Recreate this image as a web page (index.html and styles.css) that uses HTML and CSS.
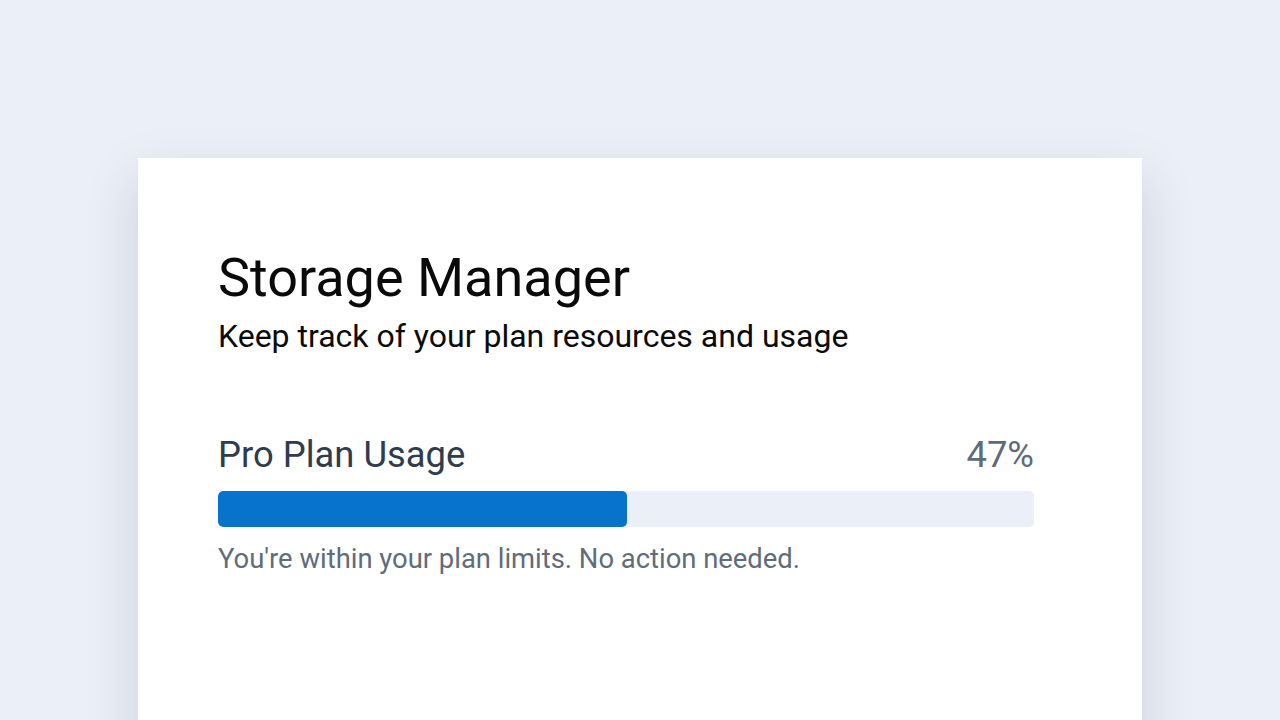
FILE: index.html
```html
<!DOCTYPE html>
<html lang="en">
<head>
<meta charset="utf-8">
<title>Storage Manager</title>
<link rel="stylesheet" href="styles.css">
</head>
<body>
<main class="stage">
  <section class="card">
    <header class="card-head">
      <h1 class="title">Storage Manager</h1>
      <p class="subtitle">Keep track of your plan resources and usage</p>
    </header>
    <div class="usage">
      <div class="usage-row">
        <span class="usage-label">Pro Plan Usage</span>
        <span class="usage-value">47%</span>
      </div>
      <div class="track"><div class="fill" style="width: 50.1%"></div></div>
      <p class="usage-note">You're within your plan limits. No action needed.</p>
    </div>
  </section>
</main>
</body>
</html>
```

FILE: styles.css
```css
* { box-sizing: border-box; }
html, body { margin: 0; padding: 0; }
body {
  background: #ebeff7;
  font-family: Roboto, "Noto Sans", sans-serif;
  width: 1280px;
  height: 720px;
  overflow: hidden;
}
.stage {
  display: flex;
  justify-content: center;
  padding-top: 158px;
}
.card {
  width: 1004px;
  height: 640px;
  background: #ffffff;
  padding: 86px 108px 0 80px;
  box-shadow: 0 20px 50px rgba(30, 50, 90, 0.16);
}
.title {
  margin: 0;
  font-size: 54px;
  font-weight: 400;
  line-height: 68px;
  color: #0a0a0a;
}
.subtitle {
  margin: 4px 0 0;
  font-size: 32px;
  font-weight: 400;
  line-height: 40px;
  color: #0a0a0a;
}
.usage { margin-top: 77px; }
.usage-row {
  display: flex;
  justify-content: space-between;
  align-items: baseline;
}
.usage-label {
  font-size: 36.4px;
  color: #2e3c4d;
  line-height: 43px;
}
.usage-value {
  font-size: 36.4px;
  color: #5d6b7b;
  line-height: 43px;
}
.track {
  margin-top: 15px;
  height: 36px;
  background: #ebeff7;
  border-radius: 5px;
  overflow: hidden;
}
.fill {
  height: 100%;
  background: #0873cc;
  border-radius: 5px;
}
.usage-note {
  margin: 14px 0 0;
  font-size: 27.4px;
  color: #5f6c7b;
  line-height: 36px;
}
```
